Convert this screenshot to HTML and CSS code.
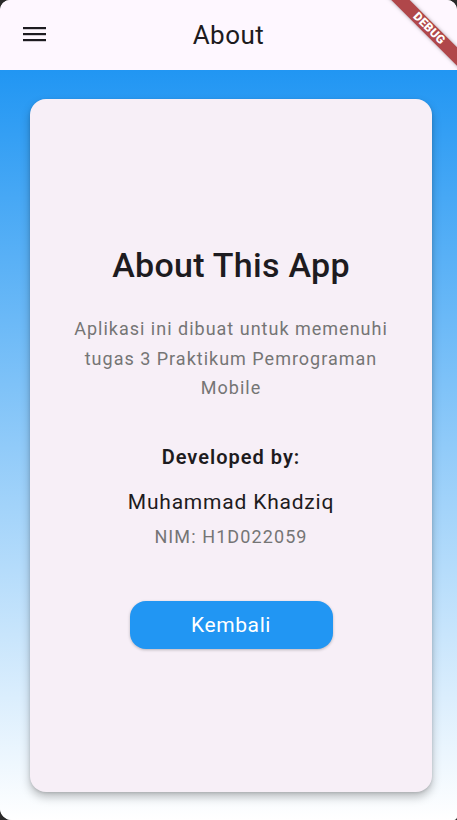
FILE: index.html
```html
<!DOCTYPE html>
<html>
<head>
<meta charset="utf-8">
<link rel="stylesheet" href="styles.css">
</head>
<body>
<div class="screen">
  <header class="appbar">
    <button class="menu-btn" aria-label="menu">
      <svg width="24" height="16" viewBox="0 0 24 16"><rect x="0" y="0" width="23" height="2.2" fill="#1d1b20"/><rect x="0" y="6" width="23" height="2.2" fill="#1d1b20"/><rect x="0" y="12" width="23" height="2.2" fill="#1d1b20"/></svg>
    </button>
    <h1 class="appbar-title">About</h1>
    <div class="appbar-spacer"></div>
  </header>
  <main class="body">
    <section class="card">
      <h2 class="card-title">About This App</h2>
      <p class="desc">Aplikasi ini dibuat untuk memenuhi tugas 3 Praktikum Pemrograman Mobile</p>
      <h3 class="dev-label">Developed by:</h3>
      <p class="dev-name">Muhammad Khadziq</p>
      <p class="dev-nim">NIM: H1D022059</p>
      <button class="back-btn">Kembali</button>
    </section>
  </main>
  <div class="debug-banner">DEBUG</div>
</div>
</body>
</html>
```
FILE: styles.css
```css
* { box-sizing: border-box; }
html, body { margin: 0; padding: 0; }
body {
  background: #2a2a2a;
  width: 457px;
  height: 820px;
  overflow: hidden;
  font-family: Roboto, "Noto Sans", sans-serif;
}
.screen {
  position: relative;
  width: 457px;
  height: 820px;
  border-radius: 10px 10px 4px 12px;
  overflow: hidden;
  display: flex;
  flex-direction: column;
  background: #fff;
}
.appbar {
  height: 70px;
  flex: none;
  background: #fef7ff;
  display: flex;
  align-items: center;
  padding: 0 12px;
}
.menu-btn {
  width: 48px;
  height: 48px;
  border: 0;
  background: transparent;
  padding: 0 0 0 11px;
  display: flex;
  align-items: center;
}
.appbar-title {
  flex: 1;
  margin: 0;
  text-align: center;
  font-size: 26px;
  letter-spacing: 0.5px;
  font-weight: 400;
  color: #1d1b20;
  line-height: 1;
}
.appbar-spacer { width: 48px; }
.body {
  flex: 1;
  background: linear-gradient(to bottom, #2196f3 0%, #ffffff 100%);
  padding: 29px 25px 28px 30px;
  display: flex;
}
.card {
  flex: 1;
  background: #f7eff7;
  border-radius: 16px;
  box-shadow: 0 5px 10px rgba(0,0,0,0.25), 0 1px 3px rgba(0,0,0,0.12);
  display: flex;
  flex-direction: column;
  align-items: center;
  justify-content: center;
  padding: 3px 20px 0;
  text-align: center;
}
.card-title {
  margin: 0;
  font-size: 34px;
  letter-spacing: 0.3px;
  font-weight: 500;
  color: #1d1b20;
  line-height: 40px;
}
.desc {
  margin: 29px 0 0;
  font-size: 18px;
  letter-spacing: 1px;
  line-height: 29.5px;
  color: #757575;
  padding: 0 8px;
}
.dev-label {
  margin: 41px 0 0;
  font-size: 20px;
  letter-spacing: 1px;
  font-weight: 600;
  color: #1d1b20;
  line-height: 26px;
}
.dev-name {
  margin: 19px 0 0;
  font-size: 21px;
  letter-spacing: 0.8px;
  color: #1d1b20;
  line-height: 26px;
}
.dev-nim {
  margin: 10px 0 0;
  font-size: 18px;
  letter-spacing: 1.1px;
  color: #757575;
  line-height: 24px;
}
.back-btn {
  margin-top: 52px;
  width: 203px;
  height: 48px;
  border: 0;
  border-radius: 16px;
  background: #2196f3;
  color: #fff;
  font-family: Roboto, sans-serif;
  font-size: 21px;
  letter-spacing: 0.6px;
  box-shadow: 0 1px 3px rgba(0,0,0,0.25);
}
.debug-banner {
  position: absolute;
  left: 368px;
  top: 22px;
  width: 122px;
  height: 13px;
  transform: rotate(45deg);
  background: #b0474a;
  color: #fff;
  font-size: 12px;
  font-weight: 900;
  line-height: 13px;
  text-align: center;
  letter-spacing: 0.2px;
  box-shadow: 0 0 4px rgba(0,0,0,0.35);
}
```
